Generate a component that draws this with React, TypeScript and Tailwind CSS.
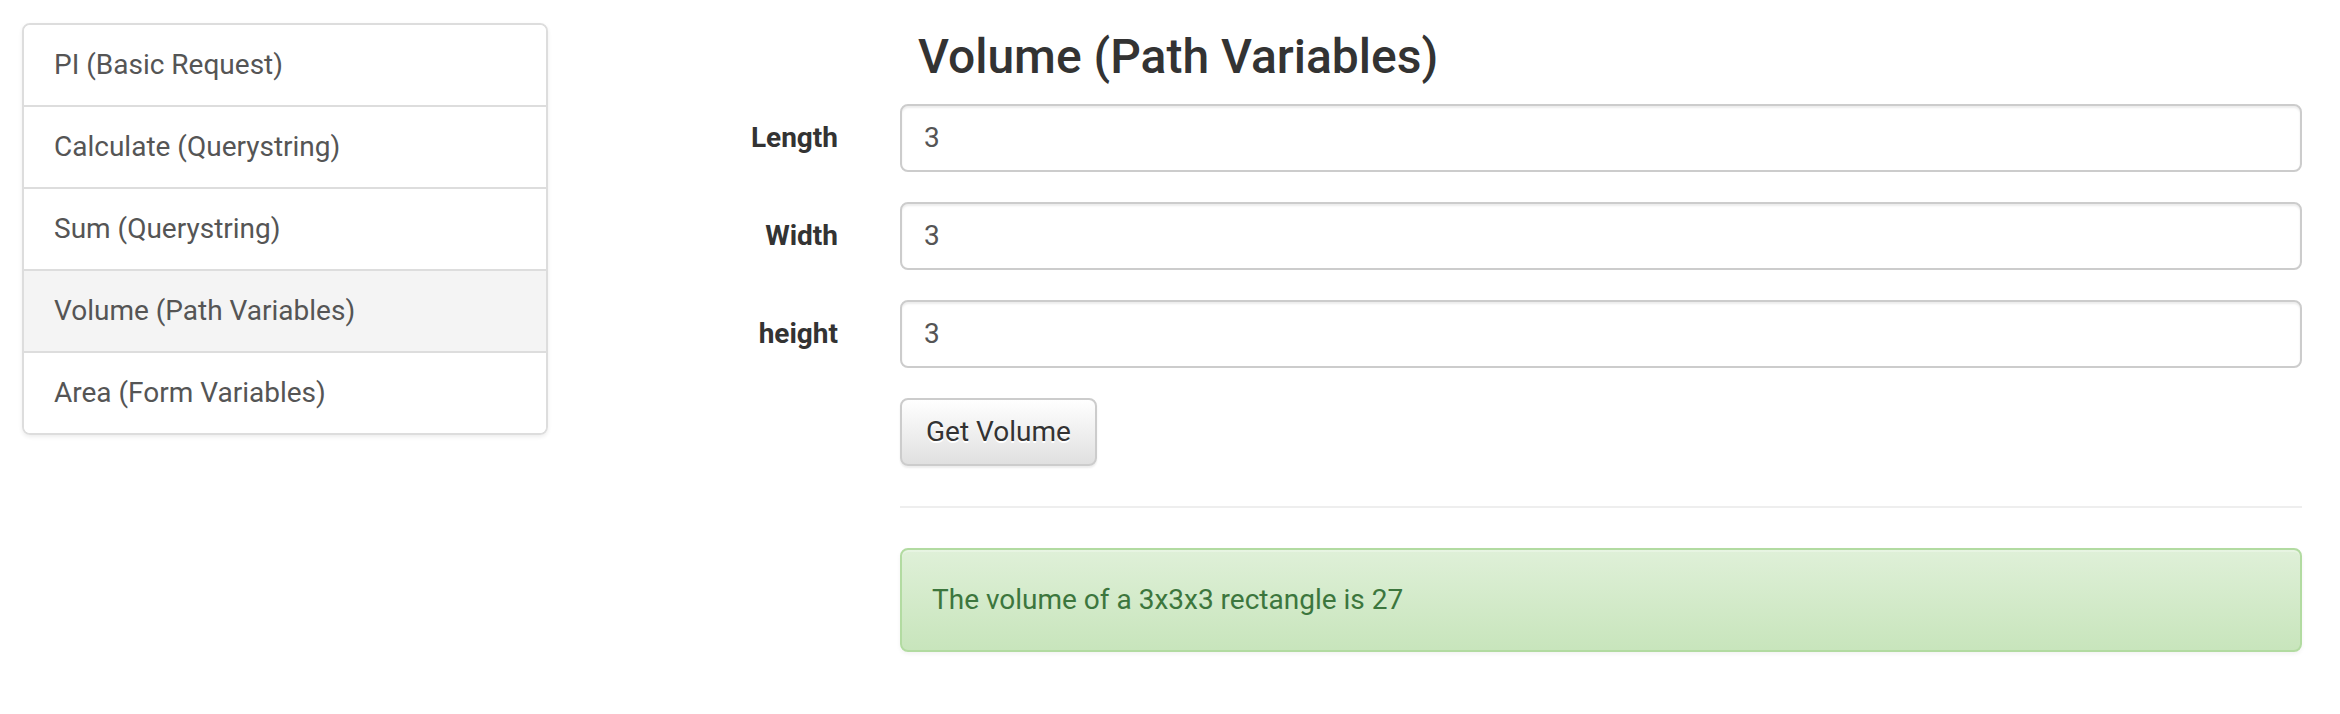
import React from "react";

const items = [
  "PI (Basic Request)",
  "Calculate (Querystring)",
  "Sum (Querystring)",
  "Volume (Path Variables)",
  "Area (Form Variables)",
];

const fields = ["Length", "Width", "height"];

export default function App() {
  return (
    <div className="flex min-h-[714px] w-full bg-white font-['Roboto','Liberation_Sans',sans-serif] text-[#333]">
      <div className="w-[548px] shrink-0 pl-[22px] pt-[23px]">
        <div className="flex w-[526px] flex-col rounded-[8px] border-2 border-[#ddd] shadow-[0_2px_4px_rgba(0,0,0,0.075)] overflow-hidden">
          {items.map((t, i) => (
            <div
              key={t}
              className={`px-[30px] py-[20px] text-[28px] leading-[40px] text-[#555] ${
                i > 0 ? "border-t-2 border-[#ddd]" : ""
              } ${i === 3 ? "bg-[#f4f4f4]" : "bg-white"}`}
            >
              {t}
            </div>
          ))}
        </div>
      </div>
      <div className="flex-1 pr-[38px]">
        <div className="pl-[352px]">
          <h3 className="mb-[21px] mt-[30px] pl-[18px] text-[48px] font-medium leading-[53px] text-[#333]">
            Volume (Path Variables)
          </h3>
        </div>
        {fields.map((f) => (
          <div key={f} className="mb-[30px] flex items-start">
            <label className="w-[290px] shrink-0 pt-[14px] text-right text-[28px] font-bold leading-[40px] text-[#333]">
              {f}
            </label>
            <div className="ml-[62px] h-[68px] flex-1 rounded-[8px] border-2 border-[#ccc] bg-white px-[22px] py-[12px] text-[28px] leading-[40px] text-[#555] shadow-[inset_0_2px_2px_rgba(0,0,0,0.075)]">
              3
            </div>
          </div>
        ))}
        <div className="pl-[352px]">
          <button className="h-[68px] rounded-[8px] border-2 border-[#ccc] bg-gradient-to-b from-white to-[#e0e0e0] px-[24px] text-[28px] leading-[40px] text-[#333] shadow-[0_2px_2px_rgba(0,0,0,0.075)] [text-shadow:0_2px_0_#fff]">
            Get Volume
          </button>
          <div className="mb-[40px] mt-[40px] border-t-2 border-[#eee]" />
          <div className="rounded-[8px] border-2 border-[#b2dba1] bg-gradient-to-b from-[#dff0d8] to-[#c8e5bc] p-[30px] text-[28px] leading-[40px] text-[#3c763d] shadow-[inset_0_2px_0_rgba(255,255,255,0.25),0_2px_4px_rgba(0,0,0,0.05)]">
            The volume of a 3x3x3 rectangle is 27
          </div>
        </div>
      </div>
    </div>
  );
}
